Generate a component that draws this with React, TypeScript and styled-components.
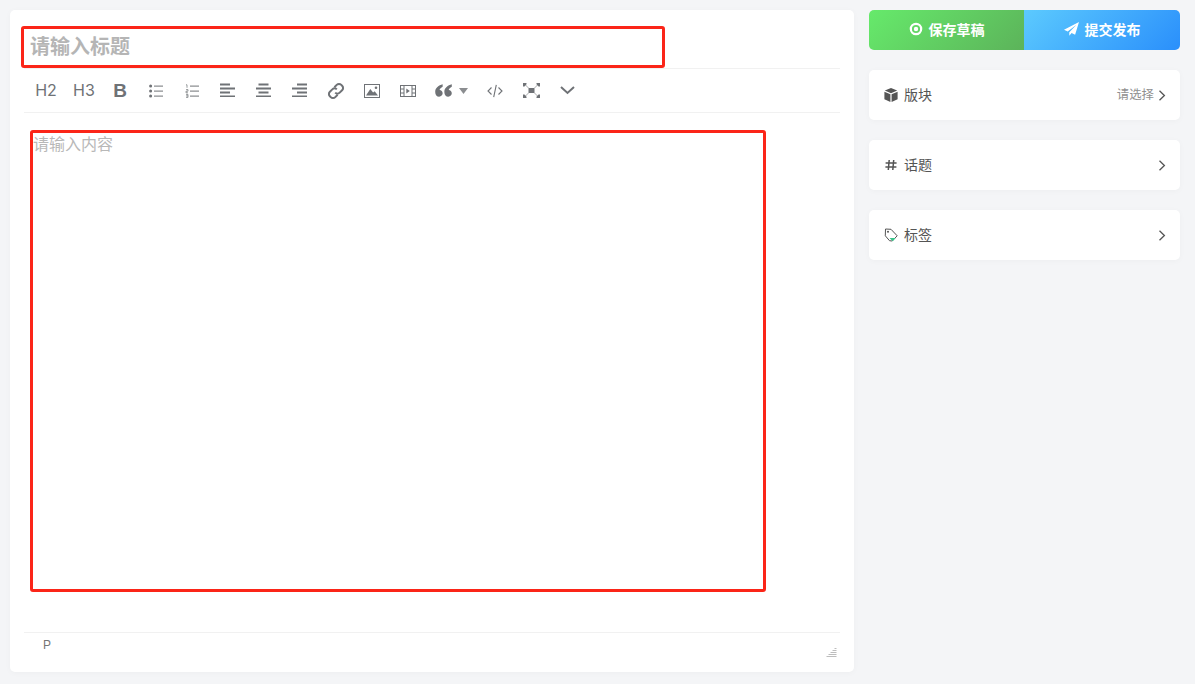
import React from 'react';
import styled, { createGlobalStyle } from 'styled-components';

const GlobalStyle = createGlobalStyle`
    html, body {
        margin: 0;
        padding: 0;
        background: #f4f5f7;
    }
    * {
        box-sizing: border-box;
    }
    body {
        font-family: "Liberation Sans", "Noto Sans CJK SC", sans-serif;
    }
`;

const Page = styled.div`
    display: flex;
    gap: 15px;
    width: 1195px;
    height: 684px;
    padding: 10px 15px 12px 10px;
`;

const EditorCard = styled.div`
    position: relative;
    display: flex;
    flex-direction: column;
    width: 844px;
    padding: 0 14px;
    background: #fff;
    border-radius: 5px;
    box-shadow: 0 1px 6px rgba(0, 0, 0, 0.03);
`;

const TitleRow = styled.div`
    display: flex;
    align-items: center;
    height: 58px;
    padding: 12px 0 0 6px;
    font-family: "Noto Sans CJK SC", sans-serif;
    font-size: 20px;
    font-weight: 700;
    color: #b5b5b5;
`;

const Toolbar = styled.div`
    display: flex;
    align-items: center;
    height: 45px;
    padding-left: 6px;
    border-top: 1px solid #f1f1f1;
    border-bottom: 1px solid #f1f1f1;
    color: #6f7276;
`;

const ToolButton = styled.div<{ $wide?: boolean }>`
    display: flex;
    align-items: center;
    justify-content: center;
    flex: none;
    gap: 7px;
    width: ${(p) => (p.$wide ? '51px' : '36px')};
    height: 42px;
`;

const HeadingLabel = styled.span<{ $nudge?: number }>`
    margin-right: ${(p) => p.$nudge ?? 0}px;
    padding-bottom: 2px;
    font-family: Inter, sans-serif;
    font-size: 16px;
    color: #6f7276;
`;

const BoldLabel = styled.span`
    font-family: "Liberation Sans", sans-serif;
    font-size: 19px;
    font-weight: 700;
    color: #6f7276;
`;

const ContentArea = styled.div`
    flex: 1;
    padding: 20px 0 0 9px;
    font-family: "Noto Sans CJK SC", sans-serif;
    font-size: 16px;
    line-height: 20px;
    color: #b8b8b8;
`;

const StatusBar = styled.div`
    display: flex;
    align-items: flex-start;
    justify-content: space-between;
    height: 40px;
    padding: 5px 3px 0 19px;
    border-top: 1px solid #f1f1f1;
    font-size: 12px;
    line-height: 14px;
    color: #757575;
`;

const ResizeGrip = styled.svg`
    margin-top: 10px;
`;

const Highlight = styled.div<{ $left: number; $top: number; $width: number; $height: number }>`
    position: absolute;
    left: ${(p) => p.$left}px;
    top: ${(p) => p.$top}px;
    width: ${(p) => p.$width}px;
    height: ${(p) => p.$height}px;
    border: 3px solid #fb2518;
    border-radius: 3px;
    pointer-events: none;
`;

const Sidebar = styled.div`
    display: flex;
    flex-direction: column;
    gap: 20px;
    width: 311px;
`;

const ActionGroup = styled.div`
    display: flex;
    height: 40px;
    border-radius: 5px;
    overflow: hidden;
`;

const ActionButton = styled.div<{ $publish?: boolean }>`
    display: flex;
    align-items: center;
    justify-content: center;
    flex: none;
    gap: 6px;
    width: ${(p) => (p.$publish ? '156px' : '155px')};
    padding-bottom: 2px;
    font-family: "Noto Sans CJK SC", sans-serif;
    font-size: 14px;
    font-weight: 700;
    color: #fff;
    background: ${(p) =>
        p.$publish
            ? 'linear-gradient(135deg, #5ccafe, #2a8ffb)'
            : 'linear-gradient(135deg, #66ea6b, #5cb35a)'};
`;

const OptionCard = styled.div`
    display: flex;
    align-items: center;
    height: 50px;
    padding: 0 14px 0 15px;
    background: #fff;
    border-radius: 5px;
    box-shadow: 0 1px 6px rgba(0, 0, 0, 0.03);
`;

const OptionIcon = styled.span`
    display: flex;
    align-items: center;
    justify-content: center;
    width: 14px;
    margin-right: 6px;
`;

const OptionLabel = styled.span`
    flex: 1;
    padding-bottom: 2px;
    font-family: "Noto Sans CJK SC", sans-serif;
    font-size: 14px;
    color: #555;
`;

const OptionHint = styled.span`
    margin-right: 4px;
    padding-bottom: 3px;
    font-family: "Noto Sans CJK SC", sans-serif;
    font-size: 12.4px;
    color: #909090;
`;

const LinesSvg = styled.svg`
    margin: 0 2px 1px 0;
`;

const Chevron = () => (
    <svg width="8" height="12" viewBox="0 0 8 12" fill="none" stroke="#555" strokeWidth="1.3">
        <path d="M1.5 1.7 6.400 6.500l-4.900 4.800" />
    </svg>
);

const Lines = ({ rows }: { rows: [number, number][] }) => (
    <LinesSvg width="15" height="14" viewBox="0 0 15 14" fill="currentColor">
        {rows.map(([x, w], i) => (
            <rect key={i} x={x} y={i * 4 + 0.5} width={w} height="2" />
        ))}
    </LinesSvg>
);

const BulletList = () => (
    <svg width="14" height="14" viewBox="0 0 14 14" fill="currentColor">
        <circle cx="1.6" cy="2" r="1.5" />
        <circle cx="1.6" cy="7" r="1.5" />
        <circle cx="1.6" cy="12" r="1.5" />
        <rect x="5" y="1.6" width="9" height="1" />
        <rect x="5" y="6.6" width="9" height="1" />
        <rect x="5" y="11.6" width="9" height="1" />
    </svg>
);

const NumberList = () => (
    <svg width="14" height="14" viewBox="0 0 14 14" fill="none" stroke="currentColor">
        <path d="M1 .8h1v3M1 5.600h2v1.600H1v1.600h2M1 10.400h2v3H1M1 11.900h2" strokeWidth=".7" />
        <path d="M5 2.100h9M5 7.100h9M5 12.100h9" strokeWidth="1" />
    </svg>
);

const LinkIcon = () => (
    <svg width="18" height="18" viewBox="0 0 18 18" fill="none" stroke="currentColor" strokeWidth="2">
        <path d="M7.400 5.200 9.700 2.900a3.200 3.200 0 0 1 4.600 0l.8.8a3.200 3.200 0 0 1 0 4.600l-2.400 2.300a3.200 3.200 0 0 1-4.500 0" />
        <path d="M10.600 12.800l-2.300 2.300a3.200 3.200 0 0 1-4.600 0l-.8-.8a3.200 3.200 0 0 1 0-4.600l2.400-2.300a3.200 3.200 0 0 1 4.500 0" />
    </svg>
);

const ImageIcon = () => (
    <svg width="16" height="14" viewBox="0 0 16 14">
        <rect x=".5" y=".5" width="15" height="13" fill="none" stroke="currentColor" />
        <path d="M2 11.500 6.300 5l2.800 3.400 1.600-1.200 3.300 4.300z" fill="currentColor" />
        <circle cx="12" cy="3.800" r="1.300" fill="currentColor" />
    </svg>
);

const VideoIcon = () => (
    <svg width="16" height="12" viewBox="0 0 16 12" fill="none" stroke="currentColor">
        <rect x=".5" y=".5" width="15" height="11" />
        <path d="M4 .5v11M12 .5v11M.5 4h3.500M.5 8h3.500M12 4h3.500M12 8h3.500" />
        <path d="M6.300 3.500 9.800 6l-3.500 2.500z" fill="currentColor" stroke="none" />
    </svg>
);

const QuoteIcon = () => (
    <svg width="17" height="13" viewBox="0 0 16 12" fill="currentColor">
        <path d="M7.200.2C3.500 1.200.2 3.500.2 7.300c0 2.700 1.500 4.500 3.700 4.500 1.900 0 3.300-1.300 3.300-3.100S5.900 5.600 4.300 5.500c.3-1.300 1.400-2.400 2.900-3.100zM15.800.2c-3.700 1-7 3.300-7 7.100 0 2.700 1.500 4.500 3.700 4.500 1.900 0 3.300-1.300 3.300-3.100s-1.300-3.100-2.900-3.200c.3-1.300 1.400-2.400 2.900-3.100z" />
    </svg>
);

const CaretDown = () => (
    <svg width="9" height="6" viewBox="0 0 9 6" fill="#8b8d90">
        <path d="M0 0h9L4.500 6z" />
    </svg>
);

const CodeIcon = () => (
    <svg width="16" height="16" viewBox="0 0 16 16" fill="none" stroke="currentColor" strokeWidth="1.100">
        <path d="M4.500 4.500 1 8l3.500 3.500M11.500 4.500 15 8l-3.500 3.500M9.300 1.800 6.700 14.200" />
    </svg>
);

const FullscreenIcon = () => (
    <svg width="17" height="15" viewBox="0 0 17 15" fill="currentColor">
        <rect x="5.500" y="5" width="6" height="5" />
        <path d="M0 0h3.500v1.200L1.500 3.500H0zM17 0h-3.500v1.200l2 2.300H17zM0 15h3.500v-1.200l-2-2.300H0zM17 15h-3.500v-1.200l2-2.300H17z" />
        <path d="M2 1.500 5.500 5M15 1.500 11.500 5M2 13.500 5.500 10M15 13.500 11.500 10" stroke="currentColor" strokeWidth=".6" />
    </svg>
);

const MoreIcon = () => (
    <svg width="15" height="9" viewBox="0 0 15 9" fill="none" stroke="currentColor" strokeWidth="2">
        <path d="M1 1l6.500 6L14 1" />
    </svg>
);

const DraftIcon = () => (
    <svg width="14" height="14" viewBox="0 0 14 14">
        <circle cx="7" cy="7" r="5.200" fill="none" stroke="#fff" strokeWidth="2.200" />
        <circle cx="7" cy="7" r="2.200" fill="#fff" />
    </svg>
);

const SendIcon = () => (
    <svg width="15" height="14" viewBox="0 0 15 14" fill="#fff">
        <path d="M15 0 0 7.800l3.700 1.600L12.500 2.700 5.300 10.300v3.500l2.300-2.700 3.500 1.600z" />
    </svg>
);

const BoxIcon = () => (
    <svg width="14" height="14" viewBox="0 0 14 14" fill="#555">
        <path d="M7 0 13.200 2.600 7 5.200.8 2.600zM.4 3.700 6.400 6.300V14L.4 11.300zM13.600 3.700 7.600 6.300V14l6-2.700z" />
    </svg>
);

const HashIcon = () => (
    <svg width="12" height="12" viewBox="0 0 12 12" fill="none" stroke="#555" strokeWidth="1.500">
        <path d="M4.200 1 3.300 11M8.700 1l-.9 10M.6 4h11M.4 8h11" />
    </svg>
);

const TagIcon = () => (
    <svg width="14" height="14" viewBox="0 0 14 14">
        <path d="M5.500 12.700 8.200 13l5-5.200L7 1.300 1.500 1l-.2 6.800z" fill="none" stroke="#555" strokeWidth="1" />
        <path d="M5.500 10h6.200l-3 3.200z" fill="#3bc48a" />
        <circle cx="4" cy="3.800" r="1" fill="#555" />
    </svg>
);

const App = () => {
    return (
        <Page>
            <GlobalStyle />
            <EditorCard>
                <TitleRow>请输入标题</TitleRow>
                <Toolbar>
                    <ToolButton><HeadingLabel $nudge={4}>H2</HeadingLabel></ToolButton>
                    <ToolButton><HeadingLabel>H3</HeadingLabel></ToolButton>
                    <ToolButton><BoldLabel>B</BoldLabel></ToolButton>
                    <ToolButton><BulletList /></ToolButton>
                    <ToolButton><NumberList /></ToolButton>
                    <ToolButton><Lines rows={[[0, 10], [0, 15], [0, 10], [0, 15]]} /></ToolButton>
                    <ToolButton><Lines rows={[[2.5, 10], [0, 15], [2.5, 10], [0, 15]]} /></ToolButton>
                    <ToolButton><Lines rows={[[5, 10], [0, 15], [5, 10], [0, 15]]} /></ToolButton>
                    <ToolButton><LinkIcon /></ToolButton>
                    <ToolButton><ImageIcon /></ToolButton>
                    <ToolButton><VideoIcon /></ToolButton>
                    <ToolButton $wide><QuoteIcon /><CaretDown /></ToolButton>
                    <ToolButton><CodeIcon /></ToolButton>
                    <ToolButton><FullscreenIcon /></ToolButton>
                    <ToolButton><MoreIcon /></ToolButton>
                </Toolbar>
                <ContentArea>请输入内容</ContentArea>
                <StatusBar>
                    P
                    <ResizeGrip width="11" height="10" viewBox="0 0 10 10" fill="#bdbdbd">
                        <rect x="8" y="0" width="2" height="1" />
                        <rect x="6" y="2" width="4" height="1" />
                        <rect x="4" y="4" width="6" height="1" />
                        <rect x="2" y="6" width="8" height="1" />
                        <rect x="0" y="8" width="10" height="1" />
                    </ResizeGrip>
                </StatusBar>
                <Highlight $left={11} $top={16} $width={644} $height={42} />
                <Highlight $left={20} $top={120} $width={736} $height={462} />
            </EditorCard>
            <Sidebar>
                <ActionGroup>
                    <ActionButton><DraftIcon />保存草稿</ActionButton>
                    <ActionButton $publish><SendIcon />提交发布</ActionButton>
                </ActionGroup>
                <OptionCard>
                    <OptionIcon><BoxIcon /></OptionIcon>
                    <OptionLabel>版块</OptionLabel>
                    <OptionHint>请选择</OptionHint>
                    <Chevron />
                </OptionCard>
                <OptionCard>
                    <OptionIcon><HashIcon /></OptionIcon>
                    <OptionLabel>话题</OptionLabel>
                    <Chevron />
                </OptionCard>
                <OptionCard>
                    <OptionIcon><TagIcon /></OptionIcon>
                    <OptionLabel>标签</OptionLabel>
                    <Chevron />
                </OptionCard>
            </Sidebar>
        </Page>
    );
};

export default App;
